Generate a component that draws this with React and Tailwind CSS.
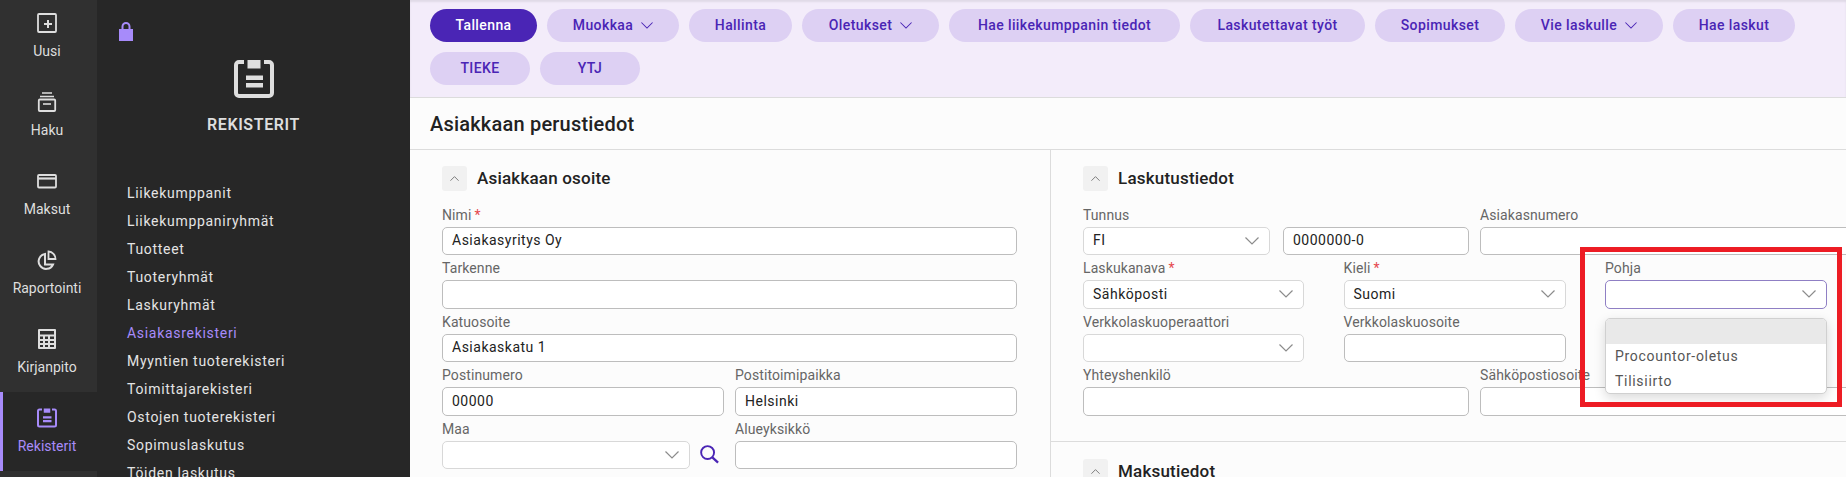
const railItems = [
  { name: 'Uusi', icon: PlusBoxIcon },
  { name: 'Haku', icon: ArchiveIcon },
  { name: 'Maksut', icon: CardIcon },
  { name: 'Raportointi', icon: PieIcon },
  { name: 'Kirjanpito', icon: CalculatorIcon },
  { name: 'Rekisterit', icon: ClipboardIcon, active: true },
];

const menuItems = [
  'Liikekumppanit',
  'Liikekumppaniryhmät',
  'Tuotteet',
  'Tuoteryhmät',
  'Laskuryhmät',
  'Asiakasrekisteri',
  'Myyntien tuoterekisteri',
  'Toimittajarekisteri',
  'Ostojen tuoterekisteri',
  'Sopimuslaskutus',
  'Töiden laskutus',
];

const toolbarItems = [
  { name: 'Tallenna', width: 'w-[107px]', primary: true },
  { name: 'Muokkaa', width: 'w-[132px]', menu: true },
  { name: 'Hallinta', width: 'w-[103px]' },
  { name: 'Oletukset', width: 'w-[137px]', menu: true },
  { name: 'Hae liikekumppanin tiedot', width: 'w-[231px]' },
  { name: 'Laskutettavat työt', width: 'w-[175px]' },
  { name: 'Sopimukset', width: 'w-[130px]' },
  { name: 'Vie laskulle', width: 'w-[148px]', menu: true },
  { name: 'Hae laskut', width: 'w-[122px]' },
  { name: 'TIEKE', width: 'w-[100px]' },
  { name: 'YTJ', width: 'w-[100px]' },
];

function PlusBoxIcon({ className }) {
  return (
    <svg viewBox="0 0 20 20" className={className} fill="none" stroke="currentColor">
      <rect x="1" y="1" width="18" height="18" rx="1" strokeWidth="1.8" />
      <path d="M11 7v8M7 11h8" strokeWidth="2" />
    </svg>
  );
}

function ArchiveIcon({ className }) {
  return (
    <svg viewBox="0 0 20 20" className={className} fill="none" stroke="currentColor" strokeWidth="1.6">
      <path d="M5 1h10M3 4.5h14" />
      <rect x="1.8" y="7.5" width="16.4" height="11.5" rx="1" strokeWidth="1.8" />
      <path d="M6 12h8" />
    </svg>
  );
}

function CardIcon({ className }) {
  return (
    <svg viewBox="0 0 20 20" className={className} fill="none" stroke="currentColor">
      <rect x="1" y="4" width="18" height="12.5" rx="1" strokeWidth="1.8" />
      <path d="M1 7.5h18" strokeWidth="2.2" />
    </svg>
  );
}

function PieIcon({ className }) {
  return (
    <svg viewBox="0 0 20 20" className={className} fill="none" stroke="currentColor" strokeWidth="2">
      <path d="M8 4a7.5 7.5 0 1 0 8 10.5H8z" />
      <path d="M11.5 1.5a7.5 7.5 0 0 1 7 7.5h-7z" strokeWidth="1.8" />
    </svg>
  );
}

function CalculatorIcon({ className }) {
  return (
    <svg viewBox="0 0 20 20" className={className} fill="currentColor">
      <path d="M2 0h16a1 1 0 0 1 1 1v18a1 1 0 0 1-1 1H2a1 1 0 0 1-1-1V1a1 1 0 0 1 1-1zm1 2v3.5h14V2zm0 5.5V10h3V7.5zm5 0V10h3V7.5zm5 0V10h4V7.5zM3 12v2h3v-2zm5 0v2h3v-2zm5 0v2h4v-2zM3 16v2h3v-2zm5 0v2h3v-2zm5 0v2h4v-2z" fillRule="evenodd" />
    </svg>
  );
}

function ClipboardIcon({ className }) {
  return (
    <svg viewBox="0 0 40 38" className={className} fill="currentColor">
      <path d="M10 2H5a3 3 0 0 0-3 3v28a3 3 0 0 0 3 3h30a3 3 0 0 0 3-3V5a3 3 0 0 0-3-3h-5" fill="none" stroke="currentColor" strokeWidth="4" />
      <rect x="13.5" y="0" width="13" height="8.5" />
      <rect x="12" y="15.5" width="17" height="4.5" />
      <rect x="12" y="23" width="17" height="4.5" />
    </svg>
  );
}

function BagIcon() {
  return (
    <svg viewBox="0 0 14 19" className="block h-[19px] w-[14px] text-[#a78bfa]" fill="currentColor">
      <path d="M0 7h14v12H0z" />
      <path d="M3.5 8V4.5a3.5 3.5 0 0 1 7 0V8" fill="none" stroke="currentColor" strokeWidth="2" />
    </svg>
  );
}

function Chevron({ className }) {
  return (
    <svg viewBox="0 0 14 8" className={className} fill="none" stroke="currentColor" strokeWidth="1.2">
      <path d="M.5.5 7 7 13.5.5" />
    </svg>
  );
}

function Rail() {
  return (
    <div className="w-[97px] shrink-0 bg-[#303030]">
      <div className="-mt-[3px]">
        {railItems.map((item) => (
          <div
            key={item.name}
            className={
              item.active
                ? 'flex h-[79px] flex-col items-center border-l-[3px] border-[#a78bfa] bg-[#272727] pr-[6px] pt-[16px] text-[#a78bfa]'
                : 'flex h-[79px] flex-col items-center pr-[3px] pt-[16px] text-[#dedede]'
            }
          >
            <item.icon className="h-5 w-5" />
            <span className="mt-2 text-[14px] leading-5">{item.name}</span>
          </div>
        ))}
      </div>
    </div>
  );
}

function Sidebar() {
  return (
    <div className="w-[313px] shrink-0 bg-[#272727] pt-[22px]">
      <div className="pl-[22px]">
        <BagIcon />
      </div>
      <ClipboardIcon className="mx-auto mt-[19px] block h-[38px] w-10 text-[#dedede]" />
      <div className="mt-[15px] text-center text-[16px] font-semibold leading-6 tracking-[0.6px] text-[#dedede]">REKISTERIT</div>
      <div className="mt-[42px] pl-[30px]">
        {menuItems.map((item) => (
          <div
            key={item}
            className={
              item === 'Asiakasrekisteri'
                ? 'h-7 text-[14px] leading-7 tracking-[0.7px] text-[#a78bfa]'
                : 'h-7 text-[14px] leading-7 tracking-[0.7px] text-[#e4e4e4]'
            }
          >
            {item}
          </div>
        ))}
      </div>
    </div>
  );
}

function Toolbar() {
  return (
    <div className="flex h-[98px] flex-wrap content-start gap-x-2.5 gap-y-2.5 border-b border-[#dcdcdc] bg-[#f3ecfa] pl-5 pt-[9px] shadow-[inset_0_2px_2px_rgba(0,0,0,0.08)]">
      {toolbarItems.map((item) => (
        <button
          key={item.name}
          className={
            (item.primary ? 'bg-[#4a25b5] text-white ' : 'bg-[#ddd0f3] text-[#4a25b5] ') +
            item.width +
            ' flex h-[33px] items-center justify-center gap-2 rounded-full text-[14px] font-medium tracking-[0.4px]'
          }
        >
          {item.name}
          {item.menu && <Chevron className="h-[7px] w-3" />}
        </button>
      ))}
    </div>
  );
}

function SectionHeader({ title }) {
  return (
    <div className="flex items-center gap-[10px]">
      <div className="flex h-[25px] w-[25px] items-center justify-center rounded-[3px] bg-[#f1f1f1]">
        <Chevron className="h-[5px] w-[9px] rotate-180 text-[#555]" />
      </div>
      <h3 className="text-[17px] font-medium tracking-[0.2px] text-[#222]">{title}</h3>
    </div>
  );
}

function Field({ label, required, value, select, width, focused, children }) {
  return (
    <div className={'relative shrink-0 ' + width}>
      <div className="h-[25px] pt-px text-[14px] leading-[25px] tracking-[0.1px] text-[#666]">
        {label}
        {required && <span className="ml-[3px] text-[#e5484d]">*</span>}
      </div>
      <div
        className={
          'flex h-[28.5px] items-center justify-between rounded-[5px] border bg-white pl-[9px] pr-2.5 text-[14px] tracking-[0.5px] text-[#222] ' +
          (focused ? 'border-[#8f7fc4]' : select ? 'border-[#d8d8d8]' : 'border-[#bdbdbd]')
        }
      >
        <span>{value}</span>
        {select && <Chevron className="h-2 w-[14px] text-[#8c8c8c]" />}
      </div>
      {children}
    </div>
  );
}

function AddressSection() {
  return (
    <div className="w-[641px] shrink-0 border-r border-[#dcdcdc] pl-8 pr-[33px] pt-[16px]">
      <SectionHeader title="Asiakkaan osoite" />
      <div className="mt-[10px]">
        <Field label="Nimi" required value="Asiakasyritys Oy" width="w-full" />
        <Field label="Tarkenne" width="w-full" />
        <Field label="Katuosoite" value="Asiakaskatu 1" width="w-full" />
        <div className="flex gap-[11px]">
          <Field label="Postinumero" value="00000" width="w-[282px]" />
          <Field label="Postitoimipaikka" value="Helsinki" width="w-[282px]" />
        </div>
        <div className="flex gap-[11px]">
          <div className="flex w-[282px] items-end justify-between">
            <Field label="Maa" select width="w-[248px]" />
            <svg viewBox="0 0 20 20" className="mb-[5px] mr-[5px] h-[19px] w-[19px] text-[#4a25b5]" fill="none" stroke="currentColor">
              <circle cx="8" cy="8" r="6.8" strokeWidth="2" />
              <path d="M13 13l6 5.5" strokeWidth="2.4" />
            </svg>
          </div>
          <Field label="Alueyksikkö" width="w-[282px]" />
        </div>
      </div>
    </div>
  );
}

function InvoiceSection() {
  return (
    <div className="flex-1">
      <div className="border-b border-[#dcdcdc] pb-[25px] pl-8 pt-[16px]">
        <SectionHeader title="Laskutustiedot" />
        <div className="mt-[10px]">
          <div className="flex">
            <Field label="Tunnus" select value="FI" width="w-[187px]" />
            <Field label="&nbsp;" value="0000000-0" width="ml-[13px] w-[186px]" />
            <Field label="Asiakasnumero" width="ml-[11px] w-[500px]" />
          </div>
          <div className="flex gap-[39.5px]">
            <Field label="Laskukanava" required select value="Sähköposti" width="w-[221px]" />
            <Field label="Kieli" required select value="Suomi" width="w-[222px]" />
            <Field label="Pohja" select focused width="w-[222px]">
              <div className="absolute left-0 right-0 top-[62.5px] z-10 h-[76.5px] overflow-hidden rounded-[5px] border border-[#d0d0d0] bg-white text-[14px] tracking-[0.7px] text-[#555] shadow-[0_4px_12px_rgba(0,0,0,0.15)]">
                <div className="h-[25px] bg-[#e9e9e9]" />
                <div className="h-[25px] pl-[9px] leading-[25px]">Procountor-oletus</div>
                <div className="h-[25px] pl-[9px] leading-[25px]">Tilisiirto</div>
              </div>
            </Field>
          </div>
          <div className="flex gap-[39.5px]">
            <Field label="Verkkolaskuoperaattori" select width="w-[221px]" />
            <Field label="Verkkolaskuosoite" width="w-[222px]" />
          </div>
          <div className="flex">
            <Field label="Yhteyshenkilö" width="w-[386px]" />
            <Field label="Sähköpostiosoite" width="ml-[11px] w-[500px]" />
          </div>
        </div>
      </div>
      <div className="pl-8 pt-[17px]">
        <SectionHeader title="Maksutiedot" />
      </div>
    </div>
  );
}

export default function App() {
  return (
    <div className="relative flex h-[477px] w-[1846px] overflow-hidden bg-[#fcfcfc] font-[Roboto,sans-serif]">
      <Rail />
      <Sidebar />
      <div className="min-w-0 flex-1">
        <Toolbar />
        <div className="flex h-[52px] items-center border-b border-[#dcdcdc] pl-5 text-[20px] font-medium tracking-[0.2px] text-[#222]">
          Asiakkaan perustiedot
        </div>
        <div className="flex h-[328px] overflow-hidden">
          <AddressSection />
          <InvoiceSection />
        </div>
      </div>
      <div className="absolute left-[1580px] top-[247px] z-20 h-[160px] w-[262px] border-[5px] border-[#ed1c24]" />
    </div>
  );
}
